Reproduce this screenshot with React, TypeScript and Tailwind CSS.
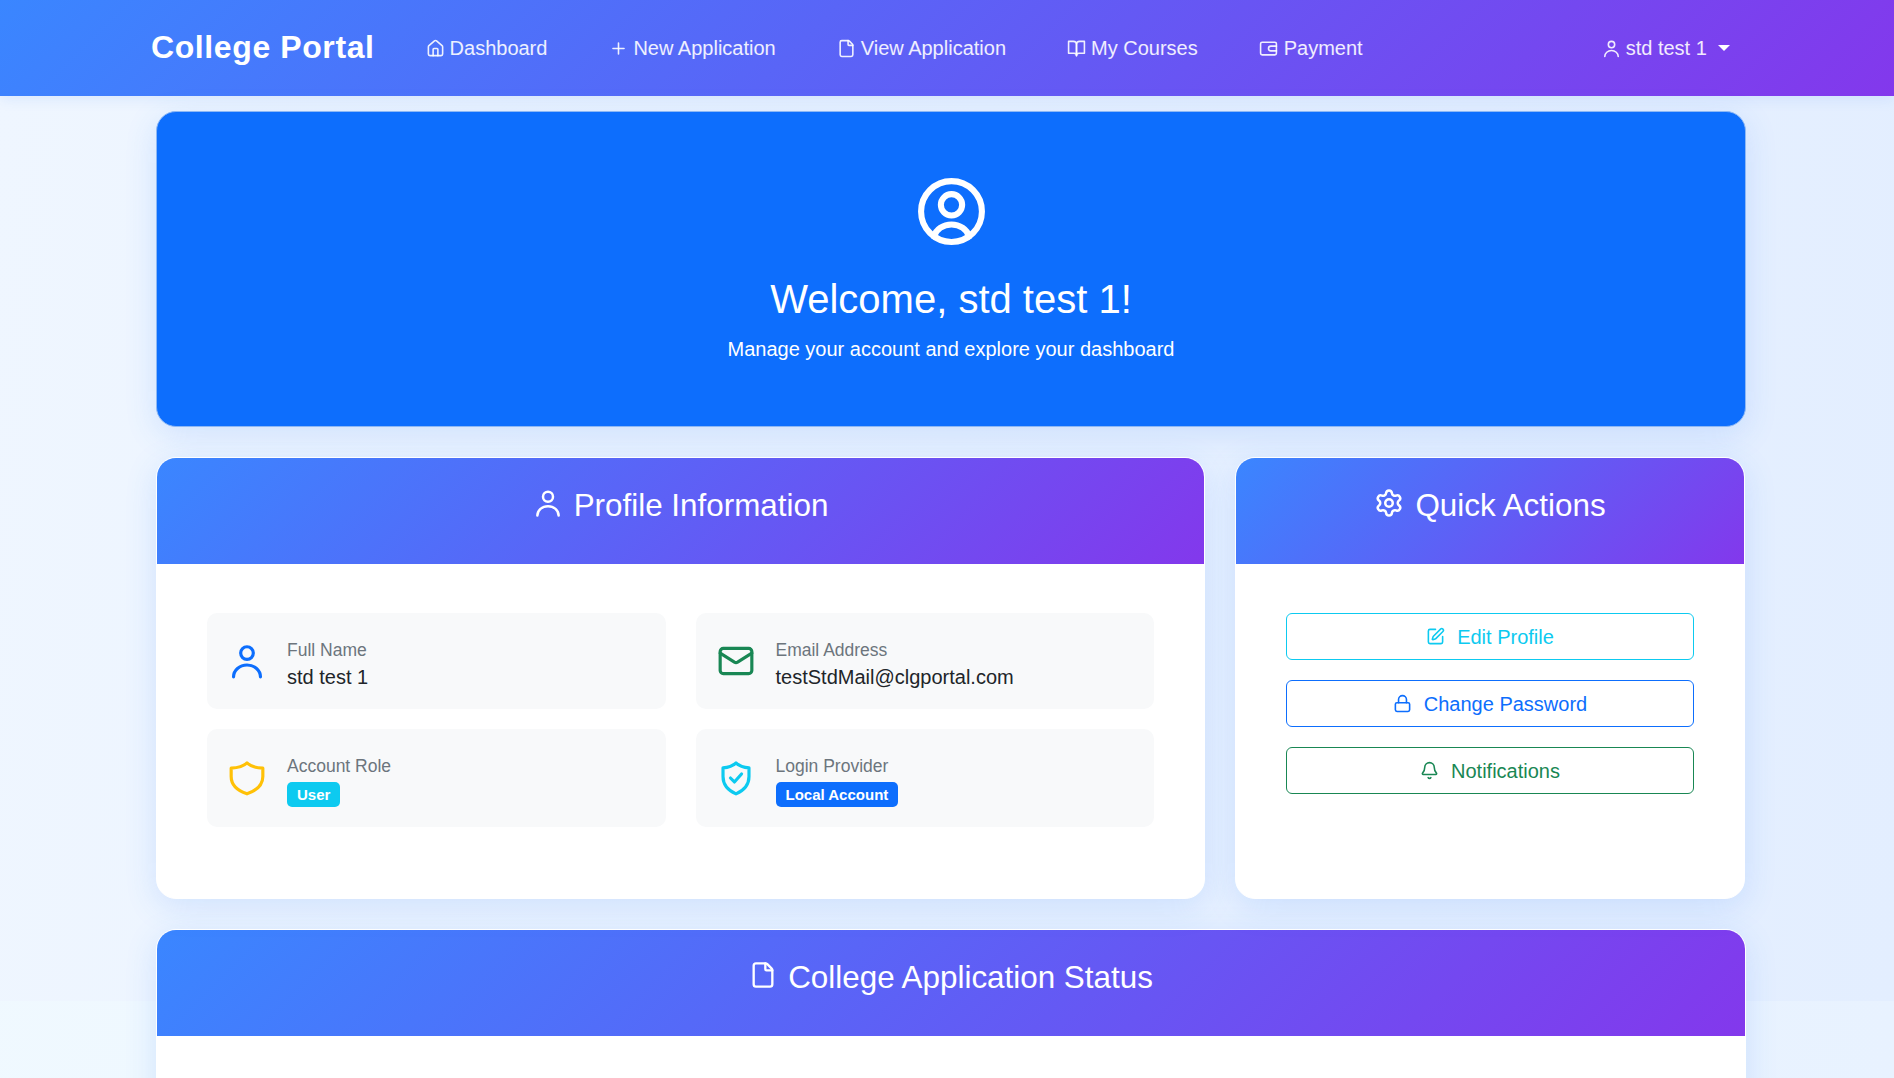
import { House, Plus, File, Settings, SquarePen, Lock, Bell, Mail } from 'lucide-react';
import { FiBookOpen } from 'react-icons/fi';
import type { ReactNode } from 'react';

const headerBg = 'bg-[linear-gradient(135deg,#3a86ff,#8338ec)]';
const cardClass = 'overflow-hidden rounded-[20px] border border-white bg-white shadow-[0_8px_32px_rgba(59,130,246,0.16)]';

const Stroke = ({ size, className, children }: { size: number; className?: string; children: ReactNode }) => (
  <svg
    width={size}
    height={size}
    viewBox="0 0 24 24"
    fill="none"
    stroke="currentColor"
    strokeWidth={2}
    strokeLinecap="round"
    strokeLinejoin="round"
    className={className}
  >
    {children}
  </svg>
);

const PersonIcon = ({ size, className }: { size: number; className?: string }) => (
  <Stroke size={size} className={className}>
    <circle cx="12" cy="7" r="4" />
    <path d="M3.5 22a8.5 7.5 0 0 1 17 0" />
  </Stroke>
);

const WalletIcon = ({ size }: { size: number }) => (
  <Stroke size={size}>
    <rect x="2" y="4" width="20" height="16" rx="2" />
    <path d="M22 9h-7a3 3 0 0 0 0 6h7" />
  </Stroke>
);

const ProfileCircle = () => (
  <Stroke size={73}>
    <circle cx="12" cy="12" r="10" />
    <circle cx="12" cy="9.8" r="3.5" />
    <path d="M17.8 20.2a6 5.3 0 0 0-11.6 0" />
  </Stroke>
);

const RoleShield = () => (
  <Stroke size={38} className="text-[#ffc107]">
    <path d="M12 2.5C14.2 4.6 17.5 5.6 22 5.8V11c0 5.2-4.2 9-10 11C6.2 20 2 16.2 2 11V5.8C6.5 5.6 9.8 4.6 12 2.5z" />
  </Stroke>
);

const ProviderShield = () => (
  <Stroke size={38} className="text-[#0dcaf0]">
    <path d="M12 2.5C14 4.3 16.8 5.3 20.2 5.6V11c0 5.2-3.2 8.8-8.2 11C7 19.8 3.8 16.2 3.8 11V5.6C7.2 5.3 10 4.3 12 2.5z" />
    <path d="m8.5 12 2.5 2.5 4.5-5" />
  </Stroke>
);

const NavItem = ({ icon, label, className }: { icon: ReactNode; label: string; className: string }) => (
  <a className={`flex items-center gap-[5px] text-[20px] text-white/90 ${className}`}>
    {icon}
    {label}
  </a>
);

const InfoItem = ({ icon, label, children }: { icon: ReactNode; label: string; children: ReactNode }) => (
  <div className="flex items-center rounded-[10px] bg-[#f8f9fa] px-5 pt-[22px] pb-[20px]">
    <div className="mr-[20px] mb-[3px] flex w-[40px] shrink-0 justify-center">{icon}</div>
    <div>
      <div className="text-[17.5px] leading-[30px] text-[#6c757d]">{label}</div>
      {children}
    </div>
  </div>
);

const Badge = ({ className, children }: { className: string; children: ReactNode }) => (
  <span className={`mt-[1px] block w-fit rounded-[5px] px-[10px] py-[5px] text-[15px] leading-[15px] font-bold text-white ${className}`}>
    {children}
  </span>
);

const CardHeader = ({ icon, title }: { icon: ReactNode; title: string }) => (
  <div className={`flex h-[106px] items-center justify-center gap-[11px] pb-[10px] text-[31.4px] text-white ${headerBg}`}>
    <span className="mb-[6px]">{icon}</span>
    {title}
  </div>
);

const ActionButton = ({ icon, label, className }: { icon: ReactNode; label: string; className: string }) => (
  <button className={`flex h-[47px] w-full items-center justify-center gap-[12px] rounded-[6px] border text-[20px] ${className}`}>
    {icon}
    {label}
  </button>
);

export default function App() {
  return (
    <div className="h-[1078px] overflow-hidden bg-[linear-gradient(95deg,#f0f9ff,#e8f2ff)] font-['Liberation_Sans',sans-serif]">
      <div className="h-[1001px] bg-[linear-gradient(95deg,#eff6ff,#e3eeff)]">
        <nav className={`flex h-[96px] items-center pl-[151px] shadow-[0_4px_12px_rgba(59,130,246,0.1)] ${headerBg}`}>
          <span className="mr-[51px] mb-[2px] text-[32px] font-bold tracking-[0.6px] text-white">College Portal</span>
          <NavItem className="mr-[62px]" icon={<House size={19} />} label="Dashboard" />
          <NavItem className="mr-[61px]" icon={<Plus size={19} />} label="New Application" />
          <NavItem className="mr-[61px]" icon={<File size={19} />} label="View Application" />
          <NavItem className="mr-[61px]" icon={<FiBookOpen size={19} />} label="My Courses" />
          <NavItem className="mr-[239px] gap-[6px]" icon={<WalletIcon size={19} />} label="Payment" />
          <NavItem className="" icon={<PersonIcon size={19} />} label="std test 1" />
          <span className="ml-[11px] h-0 w-0 border-x-[6px] border-t-[6px] border-x-transparent border-t-white" />
        </nav>

        <main className="ml-[156px] w-[1590px]">
          <section className="mt-[15px] flex h-[316px] flex-col items-center rounded-[20px] border border-[#8db8f5] bg-[#0d6efd] pt-[63px] text-white shadow-[0_8px_32px_rgba(59,130,246,0.16)]">
            <ProfileCircle />
            <h1 className="mt-[27px] text-[40px] leading-[48px]">Welcome, std test 1!</h1>
            <p className="mt-[11px] text-[20px] leading-[30px]">Manage your account and explore your dashboard</p>
          </section>

          <div className="mt-[30px] flex gap-[30px]">
            <section className={`h-[442px] w-[1049px] ${cardClass}`}>
              <CardHeader icon={<PersonIcon size={30} />} title="Profile Information" />
              <div className="grid grid-cols-2 gap-x-[30px] gap-y-[20px] px-[50px] py-[49px]">
                <InfoItem icon={<PersonIcon size={38} className="text-[#0d6efd]" />} label="Full Name">
                  <div className="text-[20px] leading-[24px] text-[#212529]">std test 1</div>
                </InfoItem>
                <InfoItem icon={<Mail size={38} className="text-[#198754]" />} label="Email Address">
                  <div className="text-[20px] leading-[24px] text-[#212529]">testStdMail@clgportal.com</div>
                </InfoItem>
                <InfoItem icon={<RoleShield />} label="Account Role">
                  <Badge className="bg-[#0dcaf0]">User</Badge>
                </InfoItem>
                <InfoItem icon={<ProviderShield />} label="Login Provider">
                  <Badge className="bg-[#0d6efd]">Local Account</Badge>
                </InfoItem>
              </div>
            </section>

            <section className={`h-[442px] w-[510px] ${cardClass}`}>
              <CardHeader icon={<Settings size={30} />} title="Quick Actions" />
              <div className="flex flex-col gap-[20px] px-[50px] py-[49px]">
                <ActionButton className="border-[#0dcaf0] text-[#0dcaf0]" icon={<SquarePen size={19} />} label="Edit Profile" />
                <ActionButton className="border-[#0d6efd] text-[#0d6efd]" icon={<Lock size={19} />} label="Change Password" />
                <ActionButton className="border-[#198754] text-[#198754]" icon={<Bell size={19} />} label="Notifications" />
              </div>
            </section>
          </div>

          <section className={`mt-[30px] h-[200px] ${cardClass}`}>
            <CardHeader icon={<File size={28} />} title="College Application Status" />
          </section>
        </main>
      </div>
    </div>
  );
}
